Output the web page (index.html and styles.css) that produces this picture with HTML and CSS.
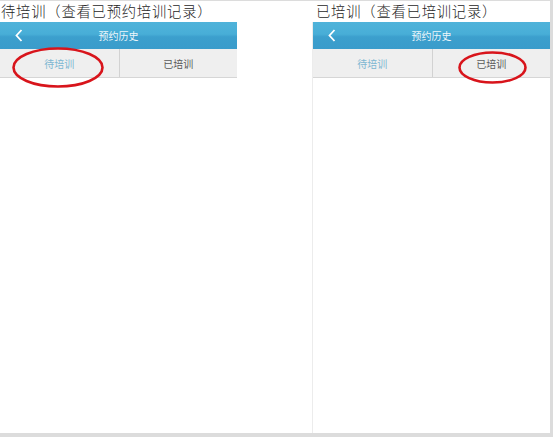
FILE: index.html
```html
<!DOCTYPE html>
<html lang="zh-CN">
<head>
  <meta charset="UTF-8">
  <title>预约历史</title>
  <link rel="stylesheet" href="styles.css">
</head>
<body>
  <div class="frame">
    <div class="column">
      <div class="caption">待培训（查看已预约培训记录）</div>
      <div class="phone">
        <div class="header">
          <svg class="back" width="8" height="13" viewBox="0 0 8 13">
            <polyline points="6.5,1 1.5,6.5 6.5,12" fill="none" stroke="#fff" stroke-width="1.8"/>
          </svg>
          <span class="title">预约历史</span>
        </div>
        <div class="tabs">
          <div class="tab active">待培训</div>
          <div class="tab">已培训</div>
        </div>
        <svg class="mark mark-left" width="92" height="41" viewBox="0 0 92 41">
          <ellipse cx="46" cy="20.5" rx="44.5" ry="19" fill="none" stroke="#d8141b" stroke-width="2.6"/>
        </svg>
      </div>
    </div>

    <div class="column">
      <div class="caption caption-right">已培训（查看已培训记录）</div>
      <div class="phone phone-right">
        <div class="header">
          <svg class="back" width="8" height="13" viewBox="0 0 8 13">
            <polyline points="6.5,1 1.5,6.5 6.5,12" fill="none" stroke="#fff" stroke-width="1.8"/>
          </svg>
          <span class="title">预约历史</span>
        </div>
        <div class="tabs">
          <div class="tab active">待培训</div>
          <div class="tab">已培训</div>
        </div>
        <svg class="mark mark-right" width="69" height="33" viewBox="0 0 69 33">
          <ellipse cx="34.5" cy="16.5" rx="33" ry="15" fill="none" stroke="#d8141b" stroke-width="2.6"/>
        </svg>
      </div>
    </div>
  </div>
</body>
</html>
```

FILE: styles.css
```css
html, body {
  margin: 0;
  padding: 0;
  background: #dcdcdc;
}

.frame {
  width: 550px;
  height: 432px;
  margin-top: 1px;
  background: #ffffff;
  display: grid;
  grid-template-columns: 237px 238px;
  column-gap: 75px;
  font-family: "Noto Sans CJK SC", sans-serif;
}

.column {
  display: flex;
  flex-direction: column;
  min-width: 0;
}

.caption {
  height: 21px;
  padding-left: 1px;
  font-size: 14.3px;
  line-height: 19px;
  font-weight: 300;
  letter-spacing: 0.8px;
  color: #1e1e1e;
  white-space: nowrap;
}

.caption-right {
  padding-left: 4px;
}

.phone {
  position: relative;
  flex: 1;
}

.phone-right {
  border-left: 1px solid #ececec;
}

.header {
  height: 27px;
  display: flex;
  align-items: center;
  justify-content: center;
  position: relative;
  background: linear-gradient(#4fb3da 0%, #48aed7 45%, #3c9fcd 55%, #3a9ccb 100%);
}

.back {
  position: absolute;
  left: 15px;
  top: 7px;
}

.title {
  color: rgba(255, 255, 255, 0.92);
  font-size: 10px;
}

.tabs {
  display: grid;
  grid-template-columns: 1fr 1fr;
  height: 28px;
  background: #efefef;
  border-bottom: 1px solid #d6d6d6;
}

.tab {
  display: flex;
  align-items: center;
  justify-content: center;
  font-size: 10px;
  color: #5a5a5a;
}

.tab + .tab {
  border-left: 1px solid #d2d2d2;
}

.tab.active {
  color: #7db7d2;
}

.mark {
  position: absolute;
}

.mark-left {
  left: 12px;
  top: 25px;
}

.mark-right {
  left: 145px;
  top: 29px;
}
```
